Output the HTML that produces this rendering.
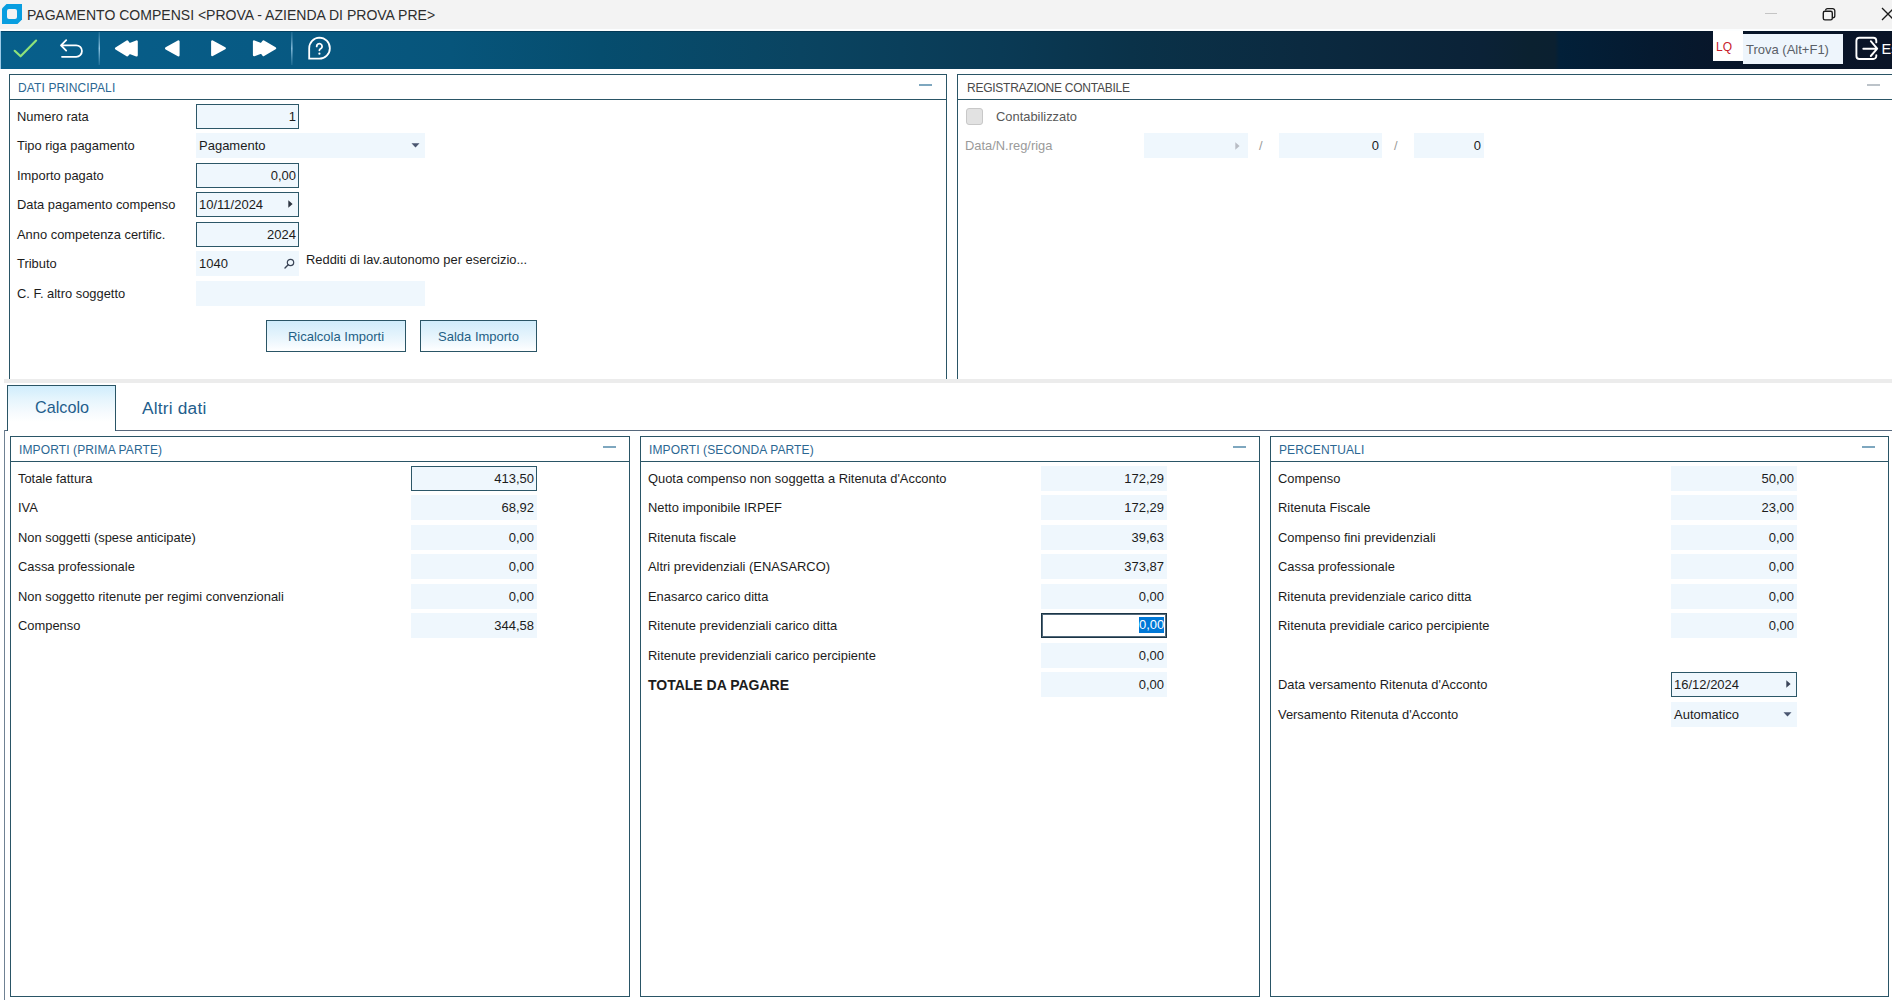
<!DOCTYPE html>
<html><head><meta charset="utf-8">
<style>
*{box-sizing:border-box;margin:0;padding:0}
html,body{width:1892px;height:1000px;overflow:hidden;background:#fff;font-family:"Liberation Sans",sans-serif;font-size:13px;color:#1c1c1c}
.a{position:absolute}
#title{left:0;top:0;width:1892px;height:29px;background:#f3f3f3}
#titletxt{left:27px;top:6px;font-size:15px;color:#2e2e2e;transform:scaleX(0.935);transform-origin:0 0;white-space:nowrap}
#tb{left:1px;top:31px;width:1891px;height:38px;background:linear-gradient(90deg,#075f8b 0px,#075a84 250px,#07557b 450px,#064d6e 600px,#0a4461 800px,#0a3a55 1000px,#0a3249 1130px,#0b2a40 1300px,#0b2237 1480px,#0b2130 1530px,#0b2030 1554px,#022039 1558px,#051a30 1650px,#08162a 1720px,#0a1427 1892px)}
.panel{border:1px solid #2a5566;background:#fff}
.ph{position:absolute;left:0;top:0;right:0;height:25px;border-bottom:1px solid #2a5566}
.pt{position:absolute;left:8px;top:6px;font-size:12px;letter-spacing:0.12px;color:#2b6792;white-space:nowrap}
.dash{position:absolute;top:9px;width:13px;height:2px;background:#7ea7bf}
.lbl{position:absolute;white-space:nowrap;font-size:12.9px;color:#1c1c1c}
.fld{position:absolute;height:25px;background:#eff7fd}
.bd{border:1px solid #2c5768}
.val{position:absolute;right:3px;top:5px;white-space:nowrap}
.vall{position:absolute;left:3px;top:5px;white-space:nowrap}
.bd .val{right:2px;top:4px}
.bd .vall{top:4px}
.btn{position:absolute;height:32px;border:1px solid #2a5566;background:linear-gradient(180deg,#d0ecfb 0%,#e3f3fc 45%,#f4fafe 80%,#ffffff 100%);color:#235f85;text-align:center;line-height:31px;white-space:nowrap}
</style></head><body>
<div id="title" class="a"></div>
<svg class="a" style="left:0;top:0" width="26" height="28" viewBox="0 0 26 28">
<path d="M6.5 4 H22 V19.5 L17.5 24 H2 V8.5 Z" fill="#089ee0"/>
<rect x="7" y="9" width="10" height="10" rx="2" fill="#f3f3f3"/>
</svg>
<svg class="a" style="left:1750px;top:0" width="142" height="29" viewBox="1750 0 142 29">
<rect x="1765" y="13" width="12" height="1" fill="#c4c4c4"/>
<path d="M1825.6,10.6 V10.6 A2,2 0 0 1 1827.6,8.6 H1832.6 A2.2,2.2 0 0 1 1834.8,10.8 V15.8 A2,2 0 0 1 1832.8,17.8" fill="none" stroke="#1a1a1a" stroke-width="1.3"/>
<rect x="1823.3" y="11.3" width="9" height="8.6" rx="1.6" fill="none" stroke="#1a1a1a" stroke-width="1.4"/>
<path d="M1882,8 L1894,20 M1894,8 L1882,20" stroke="#1a1a1a" stroke-width="1.3"/>
</svg>
<div class="a" style="left:0;top:29px;width:1892px;height:2px;background:#fcfeff"></div>
<div class="a" style="left:0;top:31px;width:1px;height:38px;background:#9ccbe8"></div>
<div id="titletxt" class="a">PAGAMENTO COMPENSI &lt;PROVA - AZIENDA DI PROVA PRE&gt;</div>

<div id="tb" class="a"></div>
<div class="a" style="left:1px;top:31px;width:1891px;height:1px;background:rgba(0,20,40,0.35)"></div>

<svg class="a" style="left:0;top:31px" width="340" height="38" viewBox="0 31 340 38">
<polyline points="14.7,50.8 20.6,56.3 36.1,40.6" fill="none" stroke="#8fe27a" stroke-width="2.2" stroke-linecap="round" stroke-linejoin="round"/>
<path d="M66.2,40.2 L61,45.3 L66.2,50.6 M61.2,45.3 H76.2 A5.75,5.75 0 0 1 76.2,56.8 H62" fill="none" stroke="#fff" stroke-width="1.8" stroke-linecap="round" stroke-linejoin="round"/>
<linearGradient id="sepg" x1="0" y1="0" x2="0" y2="1"><stop offset="0" stop-color="#7db8d8" stop-opacity="0.2"/><stop offset="0.5" stop-color="#9fd0ec" stop-opacity="1"/><stop offset="1" stop-color="#7db8d8" stop-opacity="0.2"/></linearGradient>
<rect x="98.6" y="32" width="1.3" height="33" fill="url(#sepg)"/>
<g fill="#fff" stroke="#fff" stroke-width="2.4" stroke-linejoin="round">
<path d="M116.1,48.4 L127.2,41.6 L129.4,44.4 L136.6,41.5 L136.6,55.3 L129.4,52.6 L127.2,55.2 Z"/>
<path d="M166.2,48.35 L178.4,41.5 L178.4,55.2 Z"/>
<path d="M224.7,48.25 L212.3,41.5 L212.3,55 Z"/>
<path d="M275,48.25 L263.5,41.5 L261.4,44.3 L254.1,41.5 L254.1,55 L261.4,52.3 L263.5,55 Z"/>
</g>
<rect x="291.2" y="32" width="1.3" height="33" fill="url(#sepg)"/>
<path d="M319.3,37.6 A10.55,10.55 0 1 1 319.3,58.7 H309.2 V48.15 A10.55,10.55 0 0 1 319.3,37.6 Z" fill="none" stroke="#fff" stroke-width="1.8"/>
<path d="M316.7,46.4 A2.7,2.7 0 1 1 320.9,48.6 C319.8,49.3 319.4,49.7 319.4,50.3" fill="none" stroke="#fff" stroke-width="1.8" stroke-linecap="round"/>
<circle cx="319.4" cy="53.7" r="1.1" fill="#fff"/>
</svg>
<div class="a" style="left:1713px;top:31px;width:30px;height:30px;background:#fff"></div>
<div class="a" style="left:1716px;top:40px;font-size:12px;color:#c8202c">LQ</div>
<div class="a" style="left:1743px;top:34px;width:100px;height:30px;background:#eef5fc"></div>
<div class="a" style="left:1746px;top:42px;font-size:13px;color:#5a6068;white-space:nowrap">Trova (Alt+F1)</div>
<svg class="a" style="left:1850px;top:31px" width="42" height="38" viewBox="1850 31 42 38">
<path d="M1876.3,42.4 V40.7 A3,3 0 0 0 1873.3,37.7 H1859.4 A3,3 0 0 0 1856.4,40.7 V56 A3,3 0 0 0 1859.4,59 H1873.3 A3,3 0 0 0 1876.3,56 V55.1" fill="none" stroke="#fff" stroke-width="1.9" stroke-linecap="round"/>
<path d="M1863.3,48.7 H1876.5 M1870.8,41.2 L1877.2,48.7 L1870.8,56" fill="none" stroke="#fff" stroke-width="1.9" stroke-linecap="round" stroke-linejoin="round"/>
<text x="1881.5" y="53.6" font-family="Liberation Sans" font-size="14.5" fill="#fff">Es</text>
</svg>
<div class="a panel" style="left:9px;top:74px;width:938px;height:320px"><div class="ph"><div class="pt" style="left:8px">DATI PRINCIPALI</div><div class="dash" style="left:909px"></div></div></div>
<div class="a panel" style="left:957px;top:74px;width:950px;height:320px"><div class="ph"><div class="pt" style="left:9px;color:#4a4a4a;letter-spacing:-0.25px">REGISTRAZIONE CONTABILE</div><div class="dash" style="left:909px;background:#bcc3c9"></div></div></div>
<div class="lbl" style="left:17px;top:109px">Numero rata</div>
<div class="lbl" style="left:17px;top:138px">Tipo riga pagamento</div>
<div class="lbl" style="left:17px;top:168px">Importo pagato</div>
<div class="lbl" style="left:17px;top:197px">Data pagamento compenso</div>
<div class="lbl" style="left:17px;top:227px">Anno competenza certific.</div>
<div class="lbl" style="left:17px;top:256px">Tributo</div>
<div class="lbl" style="left:17px;top:286px">C. F. altro soggetto</div>
<div class="fld bd" style="left:196px;top:104px;width:103px"><div class="val">1</div></div>
<div class="fld" style="left:196px;top:133px;width:229px"><div class="vall">Pagamento</div><svg class="a" style="left:215px;top:10px" width="9" height="5"><path d="M0.5,0.3 H8.5 L4.5,4.6Z" fill="#4a5670"/></svg></div>
<div class="fld bd" style="left:196px;top:163px;width:103px"><div class="val">0,00</div></div>
<div class="fld bd" style="left:196px;top:192px;width:103px"><div class="vall" style="left:2px">10/11/2024</div><svg class="a" style="left:91px;top:7px" width="5" height="8"><path d="M0.3,0.3 V7.7 L4.6,4Z" fill="#2c3440"/></svg></div>
<div class="fld bd" style="left:196px;top:222px;width:103px"><div class="val">2024</div></div>
<div class="fld" style="left:196px;top:251px;width:103px"><div class="vall">1040</div><svg class="a" style="left:88px;top:7px" width="11" height="11" viewBox="0 0 11 11"><circle cx="6.5" cy="4.5" r="3.2" fill="none" stroke="#3a4456" stroke-width="1.2"/><path d="M4.2,6.8 L1,10" stroke="#3a4456" stroke-width="1.4" stroke-linecap="round"/></svg></div>
<div class="lbl" style="left:306px;top:252px">Redditi di lav.autonomo per esercizio...</div>
<div class="fld" style="left:196px;top:281px;width:229px"></div>
<div class="btn" style="left:266px;top:320px;width:140px">Ricalcola Importi</div>
<div class="btn" style="left:420px;top:320px;width:117px">Salda Importo</div>
<div class="a" style="left:966px;top:108px;width:17px;height:17px;border:1px solid #c8c8c8;border-radius:3px;background:#e2e2e2"></div>
<div class="lbl" style="left:996px;top:109px;color:#585858">Contabilizzato</div>
<div class="lbl" style="left:965px;top:138px;color:#9a9a9a">Data/N.reg/riga</div>
<div class="fld" style="left:1144px;top:133px;width:104px"><svg class="a" style="left:91px;top:9px" width="5" height="8"><path d="M0.3,0.3 V7.7 L4.6,4Z" fill="#b8bcc4"/></svg></div>
<div class="lbl" style="left:1259px;top:138px;color:#9a9a9a">/</div>
<div class="fld" style="left:1279px;top:133px;width:103px"><div class="val">0</div></div>
<div class="lbl" style="left:1394px;top:138px;color:#9a9a9a">/</div>
<div class="fld" style="left:1414px;top:133px;width:70px"><div class="val">0</div></div>
<div class="a" style="left:4px;top:379px;width:1888px;height:4px;background:#ececec"></div>
<div class="a" style="left:0;top:383px;width:1892px;height:617px;background:#fff"></div>
<div class="a" style="left:4px;top:430px;width:1888px;height:1px;background:#56687c"></div>
<div class="a" style="left:4px;top:430px;width:1px;height:570px;background:#6f8193"></div>
<div class="a" style="left:7px;top:385px;width:109px;height:46px;border:1px solid #2a5566;border-bottom:none;background:linear-gradient(180deg,#d0edfc 0%,#e6f5fd 30%,#f7fbfe 60%,#ffffff 80%)"></div>
<div class="a" style="left:35px;top:398px;font-size:16.2px;color:#1f5e8c;white-space:nowrap">Calcolo</div>
<div class="a" style="left:142px;top:398px;font-size:17.3px;letter-spacing:0.2px;color:#1f5e8c;white-space:nowrap">Altri dati</div>
<div class="a panel" style="left:10px;top:436px;width:620px;height:561px"><div class="ph"><div class="pt">IMPORTI (PRIMA PARTE)</div><div class="dash" style="left:592px"></div></div></div>
<div class="a panel" style="left:640px;top:436px;width:620px;height:561px"><div class="ph"><div class="pt">IMPORTI (SECONDA PARTE)</div><div class="dash" style="left:592px"></div></div></div>
<div class="a panel" style="left:1270px;top:436px;width:619px;height:561px"><div class="ph"><div class="pt">PERCENTUALI</div><div class="dash" style="left:591px"></div></div></div>
<div class="lbl" style="left:18px;top:471px">Totale fattura</div>
<div class="fld bd" style="left:411px;top:466px;width:126px"><div class="val">413,50</div></div>
<div class="lbl" style="left:18px;top:500px">IVA</div>
<div class="fld " style="left:411px;top:495px;width:126px"><div class="val">68,92</div></div>
<div class="lbl" style="left:18px;top:530px">Non soggetti (spese anticipate)</div>
<div class="fld " style="left:411px;top:525px;width:126px"><div class="val">0,00</div></div>
<div class="lbl" style="left:18px;top:559px">Cassa professionale</div>
<div class="fld " style="left:411px;top:554px;width:126px"><div class="val">0,00</div></div>
<div class="lbl" style="left:18px;top:589px">Non soggetto ritenute per regimi convenzionali</div>
<div class="fld " style="left:411px;top:584px;width:126px"><div class="val">0,00</div></div>
<div class="lbl" style="left:18px;top:618px">Compenso</div>
<div class="fld " style="left:411px;top:613px;width:126px"><div class="val">344,58</div></div>
<div class="lbl" style="left:648px;top:471px">Quota compenso non soggetta a Ritenuta d'Acconto</div>
<div class="fld " style="left:1041px;top:466px;width:126px"><div class="val">172,29</div></div>
<div class="lbl" style="left:648px;top:500px">Netto imponibile IRPEF</div>
<div class="fld " style="left:1041px;top:495px;width:126px"><div class="val">172,29</div></div>
<div class="lbl" style="left:648px;top:530px">Ritenuta fiscale</div>
<div class="fld " style="left:1041px;top:525px;width:126px"><div class="val">39,63</div></div>
<div class="lbl" style="left:648px;top:559px">Altri previdenziali (ENASARCO)</div>
<div class="fld " style="left:1041px;top:554px;width:126px"><div class="val">373,87</div></div>
<div class="lbl" style="left:648px;top:589px">Enasarco carico ditta</div>
<div class="fld " style="left:1041px;top:584px;width:126px"><div class="val">0,00</div></div>
<div class="lbl" style="left:648px;top:618px">Ritenute previdenziali carico ditta</div>
<div class="a" style="left:1041px;top:613px;width:126px;height:25px;border:1px solid #1b3546;box-shadow:inset 0 0 0 1px #52697a;background:#fff"></div>
<div class="a" style="left:1139px;top:617px;width:25px;height:16px;background:#0078d7"></div>
<div class="a" style="left:1139px;top:617px;color:#fff;white-space:nowrap">0,00</div>
<div class="lbl" style="left:648px;top:648px">Ritenute previdenziali carico percipiente</div>
<div class="fld " style="left:1041px;top:643px;width:126px"><div class="val">0,00</div></div>
<div class="lbl" style="left:648px;top:677px;font-weight:bold;font-size:14px">TOTALE DA PAGARE</div>
<div class="fld" style="left:1041px;top:672px;width:126px"><div class="val">0,00</div></div>
<div class="lbl" style="left:1278px;top:471px">Compenso</div>
<div class="fld " style="left:1671px;top:466px;width:126px"><div class="val">50,00</div></div>
<div class="lbl" style="left:1278px;top:500px">Ritenuta Fiscale</div>
<div class="fld " style="left:1671px;top:495px;width:126px"><div class="val">23,00</div></div>
<div class="lbl" style="left:1278px;top:530px">Compenso fini previdenziali</div>
<div class="fld " style="left:1671px;top:525px;width:126px"><div class="val">0,00</div></div>
<div class="lbl" style="left:1278px;top:559px">Cassa professionale</div>
<div class="fld " style="left:1671px;top:554px;width:126px"><div class="val">0,00</div></div>
<div class="lbl" style="left:1278px;top:589px">Ritenuta previdenziale carico ditta</div>
<div class="fld " style="left:1671px;top:584px;width:126px"><div class="val">0,00</div></div>
<div class="lbl" style="left:1278px;top:618px">Ritenuta previdiale carico percipiente</div>
<div class="fld " style="left:1671px;top:613px;width:126px"><div class="val">0,00</div></div>
<div class="lbl" style="left:1278px;top:677px">Data versamento Ritenuta d'Acconto</div>
<div class="fld bd" style="left:1671px;top:672px;width:126px"><div class="vall" style="left:2px">16/12/2024</div><svg class="a" style="left:114px;top:7px" width="5" height="8"><path d="M0.3,0.3 V7.7 L4.6,4Z" fill="#3a4458"/></svg></div>
<div class="lbl" style="left:1278px;top:707px">Versamento Ritenuta d'Acconto</div>
<div class="fld" style="left:1671px;top:702px;width:126px"><div class="vall">Automatico</div><svg class="a" style="left:112px;top:10px" width="9" height="5"><path d="M0.5,0.3 H8.5 L4.5,4.6Z" fill="#4a5670"/></svg></div>
</body></html>
